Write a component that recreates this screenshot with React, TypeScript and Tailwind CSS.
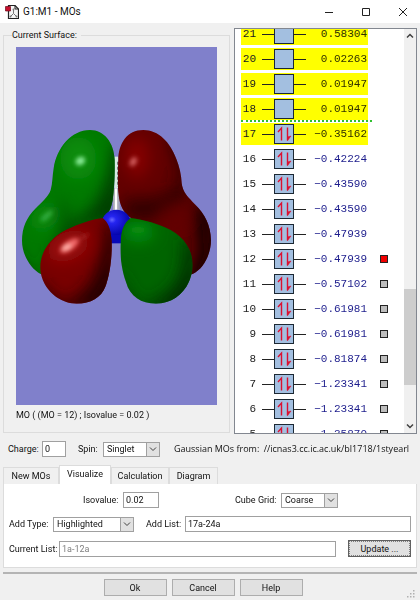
import React, { useState } from 'react';

interface Orbital {
  id: number;
  energy: string;
  occupied?: boolean;
  highlighted?: boolean;
  surface?: 'current' | 'available';
}

const orbitals: Orbital[] = [
  { id: 21, energy: '0.58304', highlighted: true },
  { id: 20, energy: '0.02263', highlighted: true },
  { id: 19, energy: '0.01947', highlighted: true },
  { id: 18, energy: '0.01947', highlighted: true },
  { id: 17, energy: '−0.35162', highlighted: true, occupied: true },
  { id: 16, energy: '−0.42224', occupied: true },
  { id: 15, energy: '−0.43590', occupied: true },
  { id: 14, energy: '−0.43590', occupied: true },
  { id: 13, energy: '−0.47939', occupied: true },
  { id: 12, energy: '−0.47939', occupied: true, surface: 'current' },
  { id: 11, energy: '−0.57102', occupied: true, surface: 'available' },
  { id: 10, energy: '−0.61981', occupied: true, surface: 'available' },
  { id: 9, energy: '−0.61981', occupied: true, surface: 'available' },
  { id: 8, energy: '−0.81874', occupied: true, surface: 'available' },
  { id: 7, energy: '−1.23341', occupied: true, surface: 'available' },
  { id: 6, energy: '−1.23341', occupied: true, surface: 'available' },
  { id: 5, energy: '−1.35870', occupied: true, surface: 'available' }
];

const HOMO = 17;

const tabs = [
  { label: 'New MOs', width: 'w-14' },
  { label: 'Visualize', width: 'w-[52px]' },
  { label: 'Calculation', width: 'w-[58px]' },
  { label: 'Diagram', width: 'w-[49px]' }
];

const inputClass = 'h-4 min-w-0 border border-[#a0a0a0] bg-white px-[2px] outline-none';
const buttonClass = 'h-[17px] w-[63px] border border-[#adadad] bg-[#e1e1e1] text-center';

const TitleBar: React.FC = () => (
  <header className="flex h-[23px] items-center bg-white pl-[5px] pr-3">
    <svg className="h-[14px] w-[14px]" viewBox="0 0 14 14" fill="none">
      <path d="M3.5 .5h6.5l3.5 3.500v9.500h-10z" fill="#f6f6f6" stroke="#222" strokeWidth="1.200" />
      <path d="M10 .5v3.500h3.500" stroke="#222" />
      <path d="M8.500 4.500v4M8.500 8.500l-3 3M8.500 8.500l3 3" stroke="#777" />
      <circle cx="8.500" cy="4.500" r="1" fill="#777" />
      <circle cx="5.500" cy="11.500" r="1" fill="#777" />
      <circle cx="11.500" cy="11.500" r="1" fill="#777" />
      <path d="M.5 1.500h5V6h-5z" fill="#c8102e" stroke="#6b0a18" strokeWidth=".7" />
    </svg>
    <h1 className="ml-1 text-[10px]">G1:M1 - MOs</h1>
    <div className="ml-auto flex items-center gap-[27px] text-[#222]">
      <button aria-label="Minimize">
        <svg className="h-[10px] w-[10px]" viewBox="0 0 10 10" stroke="currentColor">
          <path d="M1 5.500h8" />
        </svg>
      </button>
      <button aria-label="Maximize">
        <svg className="h-[10px] w-[10px]" viewBox="0 0 10 10" stroke="currentColor" fill="none">
          <path d="M1.500 1.500h7v7h-7z" />
        </svg>
      </button>
      <button aria-label="Close">
        <svg className="h-[10px] w-[10px]" viewBox="0 0 10 10" stroke="currentColor">
          <path d="M1 1l8 8M9 1l-8 8" />
        </svg>
      </button>
    </div>
  </header>
);

const SurfaceView: React.FC = () => (
  <svg className="block h-[358px] w-full bg-[#8080cb]" viewBox="18 -219 603 1074" preserveAspectRatio="xMidYMid slice">
    <defs>
      <filter id="soft" x="-60%" y="-60%" width="220%" height="220%">
        <feGaussianBlur stdDeviation="22" />
      </filter>
      <filter id="glint" x="-100%" y="-100%" width="300%" height="300%">
        <feGaussianBlur stdDeviation="6" />
      </filter>
      <radialGradient id="atom" cx=".35" cy=".4" r=".7">
        <stop offset="0" stopColor="#6868ff" />
        <stop offset=".2" stopColor="#2525f0" />
        <stop offset="1" stopColor="#0000a0" />
      </radialGradient>
      <clipPath id="greenBack">
        <path d="M240 30C283 30 312 68 314 120C315 165 312 212 308 240C303 268 295 282 280 293L150 470L92 462C62 446 36 404 36 362C36 322 50 292 76 266C96 246 114 232 122 210C128 190 127 166 131 145C140 84 184 30 240 30Z" />
      </clipPath>
      <clipPath id="redBack">
        <path d="M400 30C352 30 325 70 325 120C323 160 322 200 326 225C329 258 342 280 362 293L500 470L548 462C582 446 603 400 603 360C602 315 584 282 556 254C534 232 518 216 515 190C514 164 508 140 499 117C480 66 446 30 400 30Z" />
      </clipPath>
      <clipPath id="redFront">
        <path d="M278 294C294 306 302 326 305 362C307 402 301 462 286 500C274 532 242 551 200 551C142 551 90 498 91 442C92 390 126 350 172 328C206 312 238 300 278 294Z" />
      </clipPath>
      <clipPath id="greenFront">
        <path d="M362 294C402 300 446 311 482 330C522 352 548 390 548 436C546 500 500 551 438 551C394 551 360 530 348 486C334 448 329 400 332 366C334 330 342 308 362 294Z" />
      </clipPath>
    </defs>

    {/* Bond axis behind the lobes */}
    <path d="M313 110h12v95h-12z" fill="#d8ebe4" />
    <path d="M309 205h20v66h-20z" fill="#a9a9b8" />
    <path d="M318 205v66" stroke="#fff" strokeWidth="7" />
    <path d="M324 125v76" stroke="#444" strokeWidth="4" strokeDasharray="9 6" />

    <g clipPath="url(#greenBack)">
      <path d="M0 0h640v600H0z" fill="#007900" />
      <g filter="url(#soft)">
        <ellipse cx="205" cy="115" rx="55" ry="65" fill="#078c0b" />
        <path d="M335 60V300L210 320L90 480L165 310Q290 280 305 90Z" fill="#003d00" />
        <path d="M10 375Q40 450 95 490L20 490Z" fill="#003000" />
        <path d="M140 225Q155 250 190 270L170 305L125 320Z" fill="#006000" />
        <ellipse cx="105" cy="292" rx="22" ry="38" fill="#16951c" transform="rotate(38 105 292)" />
      </g>
      <g filter="url(#glint)">
        <ellipse cx="211" cy="123" rx="15" ry="12" fill="#8aec98" transform="rotate(-30 211 123)" />
        <ellipse cx="110" cy="288" rx="23" ry="8" fill="#34ae40" transform="rotate(-42 110 288)" />
      </g>
    </g>

    <g clipPath="url(#redBack)">
      <path d="M0 0h640v600H0z" fill="#620000" />
      <g filter="url(#soft)">
        <ellipse cx="380" cy="112" rx="38" ry="62" fill="#850000" />
        <path d="M470 40Q515 130 500 205L345 275L340 295L420 300Q490 250 530 235L530 50Z" fill="#2c0000" />
        <path d="M615 260V490H530L565 400L552 250Z" fill="#180000" />
        <ellipse cx="495" cy="285" rx="38" ry="25" fill="#620000" transform="rotate(28 495 285)" />
        <path d="M335 240L500 230L440 280L350 285Z" fill="#300000" />
      </g>
      <ellipse cx="370" cy="125" rx="9" ry="15" fill="#d66464" filter="url(#glint)" transform="rotate(30 370 125)" />
    </g>

    {/* Central atom */}
    <path d="M300 330h40v40h-40z" fill="#0808b8" />
    <ellipse cx="319" cy="307" rx="43" ry="38" fill="url(#atom)" />

    <g clipPath="url(#redFront)">
      <path d="M80 280h240v280H80z" fill="#780000" />
      <g filter="url(#soft)">
        <ellipse cx="175" cy="378" rx="65" ry="42" fill="#9c0b0b" transform="rotate(-25 175 378)" />
        <path d="M320 310V570H110Q225 540 255 460Q285 390 285 310Z" fill="#280000" />
        <path d="M80 460Q110 535 190 560H80Z" fill="#2c0000" />
      </g>
      <g filter="url(#glint)">
        <ellipse cx="178" cy="377" rx="33" ry="14" fill="#f06868" transform="rotate(-35 178 377)" />
        <ellipse cx="170" cy="382" rx="15" ry="8" fill="#ffb0a8" transform="rotate(-20 170 382)" />
        <ellipse cx="223" cy="350" rx="18" ry="4" fill="#a92222" transform="rotate(-30 223 350)" />
      </g>
    </g>

    <g clipPath="url(#greenFront)">
      <path d="M325 285h230v275H325z" fill="#006400" />
      <g filter="url(#soft)">
        <ellipse cx="385" cy="335" rx="48" ry="32" fill="#068b0c" />
        <path d="M560 360V570H350Q470 545 505 475Q525 430 520 360Z" fill="#002f00" />
        <path d="M325 440Q345 520 400 560H325Z" fill="#004200" />
      </g>
      <ellipse cx="384" cy="330" rx="22" ry="10" fill="#088a10" filter="url(#glint)" />
    </g>
  </svg>
);

const OrbitalRow: React.FC<{ orbital: Orbital }> = ({ orbital }) => (
  <li className="relative flex h-[22px] items-center pl-[6px]">
    {orbital.id === HOMO && (
      <span className="absolute -top-[3px] left-[6px] w-[131px] border-t-2 border-dotted border-[#30c030]" />
    )}
    <div
      className={`flex h-full w-[127px] items-center ${
        orbital.highlighted ? 'bg-[#ffff00] text-[#303000]' : 'text-[#1c1c8c]'
      }`}
    >
      <span className="w-[15px] text-right text-[#222]">{orbital.id}</span>
      <span className="ml-[6px] h-px w-3 bg-[#222]" />
      <svg className="h-5 w-5 border border-[#1c2833] bg-[#a3bfe0]" viewBox="0 0 18 18" fill="none">
        {orbital.occupied && (
          <g stroke="#dc1030" strokeWidth="1.400">
            <path d="M6.500 15.500V3L3 7" />
            <path d="M12.500 2.500v13" />
            <path d="M12.500 15.500v-3.500l3.500-1z" fill="#dc1030" strokeWidth=".6" />
          </g>
        )}
      </svg>
      <span className="h-px w-3 bg-[#222]" />
      <span className="ml-auto pr-px">{orbital.energy}</span>
    </div>
    {orbital.surface && (
      <input
        type="checkbox"
        aria-label={`Surface ${orbital.id}`}
        defaultChecked={orbital.surface === 'current'}
        className="ml-3 h-2 w-2 appearance-none border border-[#222] bg-[#bdbdbd] checked:bg-[#f00000]"
      />
    )}
  </li>
);

const OrbitalList: React.FC = () => (
  <section className="flex h-[406px] w-[183px] shrink-0 border border-[#828790] bg-white">
    <div className="flex-1 overflow-hidden">
      <ul className="-mt-[6px] space-y-[3px] font-['Liberation_Mono',monospace] text-[11px]">
        {orbitals.map((orbital) => (
          <OrbitalRow key={orbital.id} orbital={orbital} />
        ))}
      </ul>
    </div>
    {/* Scrollbar */}
    <div className="flex w-3 flex-col bg-[#f0f0f0]">
      <button aria-label="Scroll up" className="flex h-[14px] items-center justify-center">
        <svg className="h-2 w-2" viewBox="0 0 8 8" fill="none" stroke="#404040" strokeWidth="1.500">
          <path d="M1 5.500l3-3 3 3" />
        </svg>
      </button>
      <div className="flex-1" />
      <div className="h-24 bg-[#cdcdcd]" />
      <div className="h-[34px]" />
      <button aria-label="Scroll down" className="flex h-[14px] items-center justify-center">
        <svg className="h-2 w-2" viewBox="0 0 8 8" fill="none" stroke="#404040" strokeWidth="1.500">
          <path d="M1 2.500l3 3 3-3" />
        </svg>
      </button>
    </div>
  </section>
);

interface DropdownProps {
  id: string;
  options: string[];
  className: string;
}

const Dropdown: React.FC<DropdownProps> = ({ id, options, className }) => (
  <div className={`relative h-[15px] shrink-0 ${className}`}>
    <select id={id} className="block h-full w-full appearance-none border border-[#a0a0a0] bg-white pl-[3px] leading-3 outline-none">
      {options.map((option) => (
        <option key={option}>{option}</option>
      ))}
    </select>
    <span className="pointer-events-none absolute inset-y-0 right-0 flex w-[14px] items-center justify-center border border-[#a0a0a0] bg-[#e1e1e1]">
      <svg className="h-2 w-2" viewBox="0 0 8 8" fill="none" stroke="#404040">
        <path d="M1 2.500l3 3 3-3" />
      </svg>
    </span>
  </div>
);

const App: React.FC = () => {
  const [activeTab, setActiveTab] = useState('Visualize');

  return (
    <div className="min-h-screen bg-[#f0f0f0] font-['Roboto',sans-serif] text-[9px] leading-[14px] text-[#111]">
      <TitleBar />

      <main className="px-[3px]">
        <div className="flex gap-1 pt-[5px]">
          <fieldset className="h-[405px] min-w-0 flex-1 border border-[#dcdcdc] px-3 pt-[5px]">
            <legend className="-ml-1 -mr-1 pr-1">Current Surface:</legend>
            <SurfaceView />
            <p className="mt-[3px]">MO ( (MO = 12) ; Isovalue = 0.02 )</p>
          </fieldset>
          <OrbitalList />
        </div>

        <div className="mt-[7px] flex items-center whitespace-nowrap pl-[5px]">
          <label htmlFor="charge" className="w-[34px] shrink-0">Charge:</label>
          <input id="charge" defaultValue="0" className={`${inputClass} w-6 shrink-0`} />
          <label htmlFor="spin" className="ml-3 w-[25px] shrink-0">Spin:</label>
          <Dropdown id="spin" options={['Singlet', 'Triplet']} className="w-[57px]" />
          <p className="ml-[14px] font-['Open_Sans',sans-serif]">
            Gaussian MOs from: <span className="ml-[2px]">//icnas3.cc.ic.ac.uk/bl1718/1styearl</span>
          </p>
        </div>

        {/* Tabs */}
        <div role="tablist" className="mt-2 flex items-end">
          {tabs.map((tab) => (
            <button
              key={tab.label}
              role="tab"
              aria-selected={activeTab === tab.label}
              onClick={() => setActiveTab(tab.label)}
              className={`border border-b-0 border-[#dcdcdc] ${tab.width} ${
                activeTab === tab.label ? 'h-[19px] bg-white pb-[2px]' : 'h-[17px]'
              }`}
            >
              {tab.label}
            </button>
          ))}
        </div>

        <section className="flex flex-col gap-2 border border-t-0 border-[#dcdcdc] bg-white px-[5px] pb-[10px] pt-2">
          <div className="flex items-center whitespace-nowrap pl-[74px]">
            <label htmlFor="isovalue" className="w-10">Isovalue:</label>
            <input id="isovalue" defaultValue="0.02" className={`${inputClass} w-9`} />
            <label htmlFor="grid" className="ml-auto w-[46px]">Cube Grid:</label>
            <Dropdown id="grid" options={['Coarse', 'Medium', 'Fine']} className="mr-[73px] w-[57px]" />
          </div>
          <div className="flex items-center whitespace-nowrap">
            <label htmlFor="type" className="w-11">Add Type:</label>
            <Dropdown id="type" options={['Highlighted', 'All']} className="w-[81px]" />
            <label htmlFor="list" className="ml-3 w-[39px]">Add List:</label>
            <input id="list" defaultValue="17a-24a" className={`${inputClass} flex-1`} />
          </div>
          <div className="flex items-center whitespace-nowrap">
            <label htmlFor="current" className="w-[50px]">Current List:</label>
            <input id="current" disabled defaultValue="1a-12a" className={`${inputClass} flex-1 text-[#808080]`} />
            <button className="ml-3 h-[17px] w-[63px] border border-[#606060] bg-[#e1e1e1] outline-1 -outline-offset-2 outline-dotted outline-[#808080]">
              Update ...
            </button>
          </div>
        </section>

        <footer className="relative mt-1 flex justify-center gap-[5px] border-t-2 border-[#b4b4b4] pb-1 pr-[14px] pt-[5px]">
          <button className={buttonClass}>Ok</button>
          <button className={buttonClass}>Cancel</button>
          <button className={buttonClass}>Help</button>
          <svg className="absolute bottom-[2px] right-[2px] h-2 w-2" viewBox="0 0 8 8" fill="#b0b0b0">
            <path d="M6 0h1.500v1.500H6zM3 3h1.500v1.500H3zM6 3h1.500v1.500H6zM0 6h1.500v1.500H0zM3 6h1.500v1.500H3zM6 6h1.500v1.500H6z" />
          </svg>
        </footer>
      </main>
    </div>
  );
};

export default App;
